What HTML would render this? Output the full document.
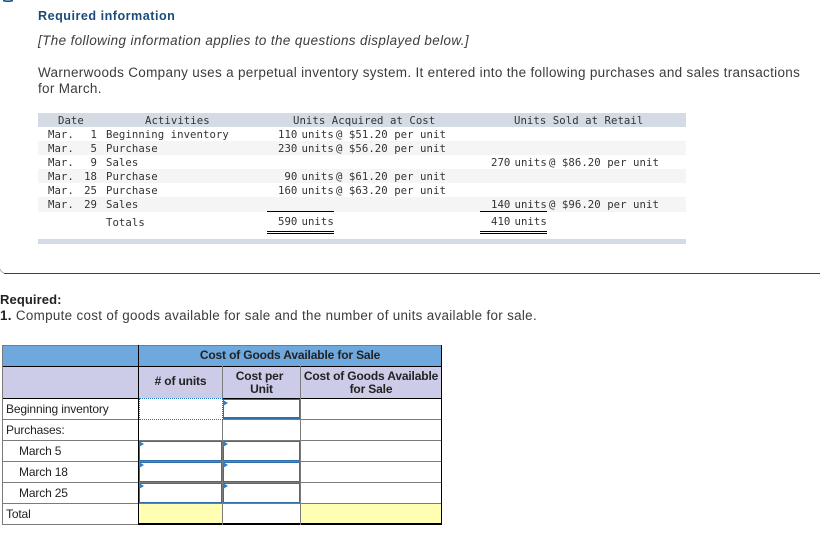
<!DOCTYPE html>
<html><head><meta charset="utf-8"><style>
html,body{margin:0;padding:0;background:#fff;width:820px;height:542px;overflow:hidden}
body{position:relative}
div{position:absolute;white-space:pre}
.p{font-family:"Liberation Sans",sans-serif;font-size:13.5px;line-height:16px;color:#3c3c3c}
.m{font-family:"DejaVu Sans Mono",monospace;font-size:10.66px;line-height:14px;color:#333;letter-spacing:.05px;margin-top:1px}
.a{font-family:"Liberation Sans",sans-serif;font-size:12px;line-height:13px;color:#222;letter-spacing:-.15px}
.b{font-weight:bold}
.c{text-align:center}
.r{text-align:right;width:20px}
.k{background:#000}.g{background:#7b7b7b}.u{background:#2f6fad}
</style></head><body>
<svg style="position:absolute;left:0;top:0" width="820" height="280">
<path d="M3 0.5 Q8 2 13 0.5" stroke="#0f4b82" stroke-width="1.5" fill="none"/>
<path d="M0 269 Q1 272 4 273" stroke="#9db4c9" stroke-width="1" fill="none"/>
<rect x="4" y="273" width="816" height="1" fill="#174a7c"/>
</svg>
<div class="p b" style="left:38px;top:8px;color:#1a4b7c;font-size:12.6px;letter-spacing:.5px">Required information</div>
<div class="p" style="left:38px;top:33px;font-style:italic;font-size:13.4px;letter-spacing:.41px">[The following information applies to the questions displayed below.]</div>
<div class="p" style="left:38px;top:65px;font-size:13.5px;letter-spacing:.31px">Warnerwoods Company uses a perpetual inventory system. It entered into the following purchases and sales transactions</div>
<div class="p" style="left:38px;top:81px;font-size:13.5px;letter-spacing:.3px">for March.</div>

<div style="left:38px;top:113px;width:648px;height:14px;background:#d4dbe5"></div>
<div style="left:38px;top:141px;width:648px;height:14px;background:#f5f5f5"></div>
<div style="left:38px;top:169px;width:648px;height:14px;background:#f5f5f5"></div>
<div style="left:38px;top:197px;width:648px;height:15px;background:#f5f5f5"></div>
<div style="left:38px;top:239px;width:648px;height:5px;background:#d4dbe5"></div>
<div class="k" style="left:267px;top:211px;width:67px;height:1px"></div>
<div class="k" style="left:267px;top:231px;width:67px;height:1px"></div>
<div class="k" style="left:267px;top:233px;width:67px;height:1px"></div>
<div class="k" style="left:480px;top:211px;width:67px;height:1px"></div>
<div class="k" style="left:480px;top:231px;width:67px;height:1px"></div>
<div class="k" style="left:480px;top:233px;width:67px;height:1px"></div>

<div class="m" style="left:58px;top:113px">Date</div>
<div class="m" style="left:145px;top:113px">Activities</div>
<div class="m" style="left:293px;top:113px">Units Acquired at Cost</div>
<div class="m" style="left:514px;top:113px">Units Sold at Retail</div>

<div class="m" style="left:48px;top:127px">Mar.</div><div class="m r" style="left:77px;top:127px">1</div><div class="m" style="left:106px;top:127px">Beginning inventory</div>
<div class="m" style="left:48px;top:141px">Mar.</div><div class="m r" style="left:77px;top:141px">5</div><div class="m" style="left:106px;top:141px">Purchase</div>
<div class="m" style="left:48px;top:155px">Mar.</div><div class="m r" style="left:77px;top:155px">9</div><div class="m" style="left:106px;top:155px">Sales</div>
<div class="m" style="left:48px;top:169px">Mar.</div><div class="m r" style="left:77px;top:169px">18</div><div class="m" style="left:106px;top:169px">Purchase</div>
<div class="m" style="left:48px;top:183px">Mar.</div><div class="m r" style="left:77px;top:183px">25</div><div class="m" style="left:106px;top:183px">Purchase</div>
<div class="m" style="left:48px;top:197px">Mar.</div><div class="m r" style="left:77px;top:197px">29</div><div class="m" style="left:106px;top:197px">Sales</div>
<div class="m" style="left:106px;top:215px">Totals</div>

<div class="m" style="left:278px;top:127px">110</div><div class="m" style="left:301.5px;top:127px">units</div><div class="m" style="left:336px;top:127px">@ $51.20 per unit</div>
<div class="m" style="left:278px;top:141px">230</div><div class="m" style="left:301.5px;top:141px">units</div><div class="m" style="left:336px;top:141px">@ $56.20 per unit</div>
<div class="m" style="left:284.4px;top:169px">90</div><div class="m" style="left:301.5px;top:169px">units</div><div class="m" style="left:336px;top:169px">@ $61.20 per unit</div>
<div class="m" style="left:278px;top:183px">160</div><div class="m" style="left:301.5px;top:183px">units</div><div class="m" style="left:336px;top:183px">@ $63.20 per unit</div>
<div class="m" style="left:278px;top:214px">590</div><div class="m" style="left:301.5px;top:214px">units</div>
<div class="m" style="left:491px;top:155px">270</div><div class="m" style="left:514.5px;top:155px">units</div><div class="m" style="left:549px;top:155px">@ $86.20 per unit</div>
<div class="m" style="left:491px;top:197px">140</div><div class="m" style="left:514.5px;top:197px">units</div><div class="m" style="left:549px;top:197px">@ $96.20 per unit</div>
<div class="m" style="left:491px;top:214px">410</div><div class="m" style="left:514.5px;top:214px">units</div>

<div class="p b" style="left:0;top:292px;color:#222;font-size:13px;letter-spacing:.1px">Required:</div>
<div class="p" style="left:0;top:308px;font-size:13.4px;letter-spacing:.32px"><span class="b" style="color:#222">1.</span> Compute cost of goods available for sale and the number of units available for sale.</div>

<div style="left:3px;top:346px;width:135px;height:20px;background:#6fa8dc"></div>
<div style="left:139px;top:346px;width:302px;height:20px;background:#6fa8dc"></div>
<div style="left:3px;top:367px;width:135px;height:31px;background:#cccbe8"></div>
<div style="left:139px;top:367px;width:302px;height:31px;background:#cccbe8"></div>
<div style="left:139px;top:504px;width:83px;height:19px;background:#ffffb3"></div>
<div style="left:301px;top:504px;width:140px;height:19px;background:#ffffb3"></div>

<div class="g" style="left:2px;top:345px;width:440px;height:1px"></div>
<div class="k" style="left:2px;top:366px;width:440px;height:1px"></div>
<div class="k" style="left:2px;top:398px;width:440px;height:1px"></div>
<div class="g" style="left:2px;top:419px;width:440px;height:1px"></div>
<div class="g" style="left:2px;top:440px;width:440px;height:1px"></div>
<div class="g" style="left:2px;top:461px;width:440px;height:1px"></div>
<div class="g" style="left:2px;top:482px;width:440px;height:1px"></div>
<div class="g" style="left:2px;top:503px;width:440px;height:1px"></div>
<div class="g" style="left:2px;top:524px;width:137px;height:1px"></div>
<div class="k" style="left:139px;top:523px;width:303px;height:2px"></div>
<div class="g" style="left:2px;top:345px;width:1px;height:180px"></div>
<div class="k" style="left:138px;top:345px;width:1px;height:180px"></div>
<div class="g" style="left:222px;top:366px;width:1px;height:159px"></div>
<div class="g" style="left:300px;top:366px;width:1px;height:159px"></div>
<div class="k" style="left:441px;top:345px;width:1px;height:180px"></div>

<div style="left:139px;top:398px;box-sizing:border-box;border:1px dotted #1f77c9;background:#fff;width:84px;height:22px"></div>

<div style="left:223px;top:399px;width:77px;height:20px;box-sizing:border-box;border:1px solid #2f6fad;border-bottom-width:2px;background:#fff"></div>
<div style="left:139px;top:441px;width:83px;height:20px;box-sizing:border-box;border:1px solid #2f6fad;background:#fff"></div>
<div style="left:223px;top:441px;width:77px;height:20px;box-sizing:border-box;border:1px solid #2f6fad;background:#fff"></div>
<div style="left:139px;top:462px;width:83px;height:20px;box-sizing:border-box;border:1px solid #2f6fad;background:#fff"></div>
<div style="left:223px;top:462px;width:77px;height:20px;box-sizing:border-box;border:1px solid #2f6fad;background:#fff"></div>
<div style="left:139px;top:483px;width:83px;height:20px;box-sizing:border-box;border:1px solid #2f6fad;background:#fff"></div>
<div style="left:223px;top:483px;width:77px;height:20px;box-sizing:border-box;border:1px solid #2f6fad;background:#fff"></div>

<svg style="position:absolute;left:0;top:395px" width="320" height="110" fill="#2f7fc4">
<path d="M223 5 L228 8 L223 11Z"/>
<path d="M139 46 L144 49 L139 52Z"/><path d="M223 46 L228 49 L223 52Z"/>
<path d="M139 67 L144 70 L139 73Z"/><path d="M223 67 L228 70 L223 73Z"/>
<path d="M139 88 L144 91 L139 94Z"/><path d="M223 88 L228 91 L223 94Z"/>
</svg>

<div class="a b c" style="left:139px;top:349px;width:302px">Cost of Goods Available for Sale</div>
<div class="a b c" style="left:139px;top:375px;width:83px"># of units</div>
<div class="a b c" style="left:221px;top:370px;width:77px">Cost per</div>
<div class="a b c" style="left:223px;top:383px;width:77px">Unit</div>
<div class="a b c" style="left:301px;top:370px;width:140px">Cost of Goods Available
for Sale</div>

<div class="a" style="left:6px;top:403px">Beginning inventory</div>
<div class="a" style="left:6px;top:424px">Purchases:</div>
<div class="a" style="left:19px;top:445px">March 5</div>
<div class="a" style="left:19px;top:466px">March 18</div>
<div class="a" style="left:19px;top:487px">March 25</div>
<div class="a" style="left:6px;top:508px">Total</div>
</body></html>
